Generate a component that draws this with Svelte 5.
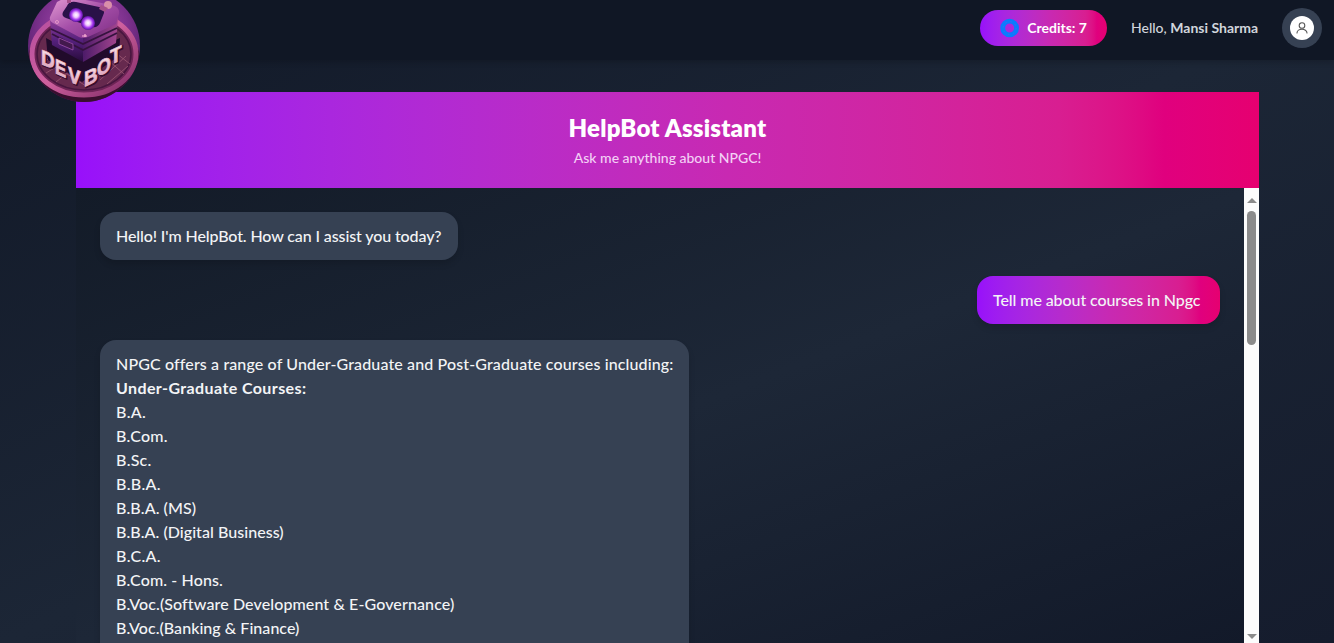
<script>
  const courses = [
    ['B.A.', 0.3], ['B.Com.', 0.2], ['B.Sc.', 0.25], ['B.B.A.', 0.3], ['B.B.A. (MS)', 0.08],
    ['B.B.A. (Digital Business)', 0.05], ['B.C.A.', 0.3], ['B.Com. - Hons.', 0.12],
    ['B.Voc.(Software Development & E-Governance)', 0.11], ['B.Voc.(Banking & Finance)', 0.04]
  ];
</script>

<div class="page">
  <header>
    <svg class="logo" width="112" height="103" viewBox="0 0 112 103" aria-label="DevBot">
      <defs>
        <clipPath id="disc"><circle cx="56" cy="46" r="56" /></clipPath>
        <radialGradient id="bg" cx="50%" cy="35%" r="65%">
          <stop offset="0" stop-color="#b652b8" /><stop offset=".6" stop-color="#7c318d" /><stop offset="1" stop-color="#4b1a62" />
        </radialGradient>
        <linearGradient id="ring" x1="0" x2="1" y1="0" y2="1">
          <stop offset="0" stop-color="#b34c9f" /><stop offset=".5" stop-color="#cf609e" /><stop offset="1" stop-color="#7b2862" />
        </linearGradient>
        <linearGradient id="top" x1="0" x2="1" y1="0" y2="1">
          <stop offset="0" stop-color="#e39bd3" /><stop offset=".5" stop-color="#a44ea8" /><stop offset="1" stop-color="#7d2d83" />
        </linearGradient>
        <linearGradient id="left" x1="0" x2="0" y1="0" y2="1">
          <stop offset="0" stop-color="#8d3d98" /><stop offset=".5" stop-color="#54207b" /><stop offset="1" stop-color="#270b3b" />
        </linearGradient>
        <linearGradient id="right" x1="0" x2="1">
          <stop offset="0" stop-color="#4d1b69" /><stop offset="1" stop-color="#a4468f" />
        </linearGradient>
        <linearGradient id="letter" x1="0" x2="0" y1="0" y2="1">
          <stop offset="0" stop-color="#fff0f0" /><stop offset="1" stop-color="#d99bb7" />
        </linearGradient>
        <radialGradient id="eye"><stop offset="0" stop-color="#fff" /><stop offset=".35" stop-color="#f0c5ff" /><stop offset=".7" stop-color="#a335ee" /><stop offset="1" stop-color="#5b149a" /></radialGradient>
      </defs>
      <circle cx="56" cy="46" r="56" fill="url(#bg)" />
      <g clip-path="url(#disc)">
        <ellipse cx="56" cy="60" rx="56" ry="43" fill="#3a0e2e" />
        <ellipse cx="56" cy="54" rx="52" ry="41" fill="#6d2455" stroke="url(#ring)" stroke-width="5" />
        <ellipse cx="56" cy="54" rx="47" ry="36" fill="#66294e" stroke="#48163f" stroke-width="1.5" />
        <path d="M14 62 34 53M18 73 43 58M28 82 52 63M72 80l26-24M79 84l21-18M28 67l30 19M21 51l29 25M84 50l18 14M80 60l16 14" stroke="#9c5874" stroke-width=".8" />
      </g>
      <path d="M18 38 52 56 92 38 91 56 54 82 20 60Z" fill="#210b2b" />
      <path d="m22 20 33 16v26L24 45Z" fill="url(#left)" />
      <path d="m55 36 35-18-2 25-33 19Z" fill="url(#right)" />
      <path d="M29 2Q37-3 47-2l37 7q8 2 7 9l-3 10-28 13q-5 2-9 0L25 23q-4-2-3-6Z" fill="url(#top)" />
      <path d="M23 29 55 44 89 28M24 34 55 50 89 33" fill="none" stroke="#35123e" stroke-width="1.8" />
      <path d="M39 6q2-5 9-4l23 5q6 1 5 6l-4 10q-2 5-8 4L38 18q-5-2-3-6Z" fill="#291148" />
      <circle cx="48" cy="15" r="7" fill="url(#eye)" /><circle cx="60" cy="23" r="7" fill="url(#eye)" />
      <path d="m31 38 14 6v6l-14-6Z" fill="#42194d" stroke="#a052ae" stroke-width=".8" />
      <circle cx="80" cy="5" r="4" fill="#d98fa9" /><path d="M39 0h4v3h-4zM73 5l7 3-3 4-6-3z" fill="#a54f8b" />
      <circle cx="29" cy="22" r="1.5" fill="none" stroke="#f5abd1" stroke-width=".7" /><path d="M54 36h5M57 34v3" stroke="#ffb6d7" stroke-width="1.2" />
      <g class="letters" fill="#5b1837" stroke="#3a0d2b" stroke-width="2">
        <text transform="matrix(.9 .36 0 1 14 65)">D</text><text transform="matrix(.8 .36 0 1 28 74)">E</text><text transform="matrix(.9 .36 0 1 41 82)">V</text>
        <text transform="matrix(.9 -.42 0 1 57 88)">B</text><text transform="matrix(.85 -.42 0 1 70 78)">O</text><text transform="matrix(.9 -.42 0 1 83 66)">T</text>
      </g>
      <g class="letters" fill="url(#letter)" stroke="#e8b7cb" stroke-width=".8" aria-hidden="true">
        <text transform="matrix(.9 .36 0 1 13 64)">D</text><text transform="matrix(.8 .36 0 1 27 73)">E</text><text transform="matrix(.9 .36 0 1 40 81)">V</text>
        <text transform="matrix(.9 -.42 0 1 56 87)">B</text><text transform="matrix(.85 -.42 0 1 69 77)">O</text><text transform="matrix(.9 -.42 0 1 82 65)">T</text>
      </g>
    </svg>
    <div class="account">
      <div class="credits">
        <svg width="20" height="20" viewBox="0 0 20 20"><circle cx="10" cy="10" r="7.2" fill="none" stroke="#087cff" stroke-width="5" /><circle cx="10" cy="10" r="6.7" fill="none" stroke="#4c61ee" stroke-width="1" stroke-dasharray="1.5 3.76" /></svg>
        <span>Credits: 7</span>
      </div>
      <p class="hello">Hello, <b>Mansi Sharma</b></p>
      <div class="avatar"><div><svg width="14" height="14" viewBox="0 0 14 14" fill="none" stroke="#555" stroke-width="1.1" stroke-linecap="round"><circle cx="7" cy="4.5" r="2.8" /><path d="M2 12c0-5 10-5 10 0" /></svg></div></div>
    </div>
  </header>
  <main>
    <section class="title"><h1>HelpBot Assistant</h1><p>Ask me anything about NPGC!</p></section>
    <div class="chat">
      <div class="messages">
        <div class="bubble bot greet">Hello! I'm HelpBot. How can I assist you today?</div>
        <div class="bubble user">Tell me about courses in Npgc</div>
        <div class="bubble bot answer">
          <div class="intro">NPGC offers a range of Under-Graduate and Post-Graduate courses including:</div>
          <b class="group">Under-Graduate Courses:</b>
          {#each courses as [name, spacing]}<div style:letter-spacing={`${spacing}px`}>{name}</div>{/each}
        </div>
      </div>
      <div class="scrollbar"><i class="up"></i><i class="thumb"></i><i class="down"></i></div>
    </div>
  </main>
</div>

<style>
  :global(body) { background: #111827; overflow: hidden; }
  .page { height: 643px; overflow: hidden; display: flex; flex-direction: column; background: linear-gradient(to bottom right, #111827, #1c2636 50%, #151c2d); font-family: Lato, sans-serif; font-size: 16px; font-weight: 500; line-height: 24px; color: #f3f4f6; }
  header { flex: none; height: 60px; display: flex; align-items: flex-start; justify-content: space-between; padding: 0 12px 0 28px; background: #101725; box-shadow: 0 2px 6px #0003; position: relative; z-index: 1; box-sizing: border-box; }
  .logo { overflow: visible; flex: none; }
  .letters { font: 900 21px "Liberation Sans", sans-serif; }
  .account { display: flex; align-items: center; height: 56px; gap: 24px; }
  .credits { width: 127px; height: 36px; box-sizing: border-box; border-radius: 18px; padding: 0 20px; display: flex; align-items: center; gap: 8px; font-size: 14px; font-weight: 700; color: white; white-space: nowrap; }
  .credits, .title, .user { background: linear-gradient(to right in oklab, #9810fa, #c829b2 55%, #d81e91 83%, #e0007e 92%, #e60070); }
  p, h1 { margin: 0; }
  .hello { font-size: 14px; color: #d1d5dc; width: 127px; white-space: nowrap; }
  .avatar { width: 40px; height: 40px; border-radius: 50%; background: #364153; display: grid; place-items: center; }
  .avatar div { width: 24px; height: 24px; border-radius: 50%; background: white; display: grid; place-items: center; }
  main { flex: none; margin: 32px 75px 0 76px; height: 551px; display: flex; flex-direction: column; }
  .title { height: 96px; flex: none; box-sizing: border-box; padding-top: 20px; text-align: center; }
  h1 { font-size: 24px; line-height: 32px; font-weight: 800; letter-spacing: .2px; color: white; }
  .title p { font-size: 14px; line-height: 20px; margin-top: 4px; color: #f3d0f5; }
  .chat { flex: 1; display: flex; min-height: 0; overflow: hidden; background: linear-gradient(to bottom right, #131b28, #1d2737 50%, #121929); }
  .messages { flex: 1; padding: 24px; display: flex; flex-direction: column; align-items: flex-start; gap: 16px; }
  .bubble { border-radius: 16px; padding: 12px 16px; box-sizing: border-box; white-space: nowrap; flex-shrink: 0; box-shadow: 0 4px 6px #0002; }
  .bot { background: #364153; }
  .greet { width: 358px; letter-spacing: -.11px; }
  .user { align-self: flex-end; width: 243px; letter-spacing: -.09px; }
  .answer { width: 589px; padding-bottom: 48px; }
  .intro { letter-spacing: .13px; }
  .group { letter-spacing: .4px; }
  .scrollbar { width: 15px; background: #fcfcfc; display: flex; flex-direction: column; align-items: center; }
  .up { border: 5px solid transparent; border-top: 0; border-bottom: 5px solid #8b8b8b; margin-top: 10px; }
  .thumb { width: 9px; height: 134px; border-radius: 5px; background: #8b8b8b; margin-top: 8px; }
  .down { border: 5px solid transparent; border-bottom: 0; border-top: 5px solid #8b8b8b; margin-top: auto; margin-bottom: 4px; }
</style>
